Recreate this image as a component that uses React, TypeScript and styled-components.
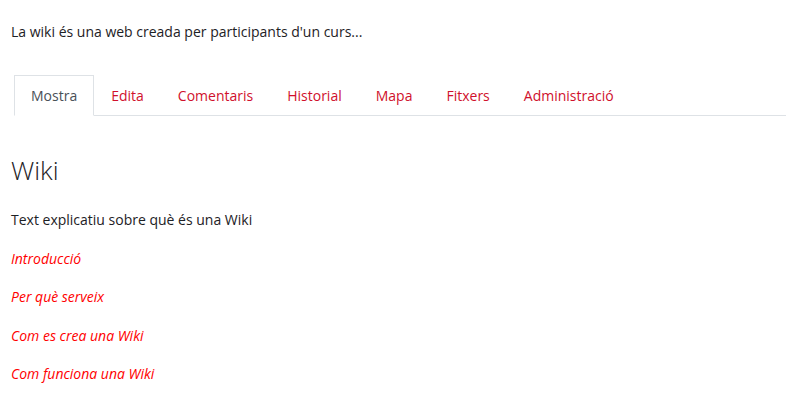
import React, { ReactElement } from 'react';
import styled, { createGlobalStyle } from 'styled-components';

const GlobalStyle = createGlobalStyle`
  html, body {
    margin: 0;
    padding: 0;
    background: #fff;
  }
  body {
    font-family: 'Open Sans', 'Noto Sans', sans-serif;
    font-size: 14px;
    line-height: 1.5;
    color: #1d2125;
  }
`;

const Page = styled.div`
  padding: 21px 11px 0 11px;
`;

const Intro = styled.p`
  margin: 0 0 32px 0;
  font-size: 14px;
  line-height: 22px;
`;

const TabList = styled.ul`
  display: flex;
  list-style: none;
  margin: 0 0 0 3px;
  padding: 0;
  border-bottom: 1px solid #dee2e6;
`;

const TabItem = styled.li`
  margin-bottom: -1px;
`;

const TabLink = styled.a<{ $active?: boolean }>`
  display: block;
  padding: 9px 16px 8px 16px;
  font-size: 14px;
  line-height: 22px;
  text-decoration: none;
  cursor: pointer;
  border: 1px solid ${(p) => (p.$active ? '#dee2e6' : 'transparent')};
  border-bottom-color: ${(p) => (p.$active ? '#fff' : 'transparent')};
  background: ${(p) => (p.$active ? '#fff' : 'transparent')};
  color: ${(p) => (p.$active ? '#495057' : '#d0102c')};
`;

const Heading = styled.h2`
  margin: 39px 0 23px 0;
  font-size: 26px;
  font-weight: 300;
  line-height: 1.2;
  color: #1d2125;
`;

const Para = styled.p`
  margin: 0 0 16px 0;
  font-size: 14px;
  line-height: 22.5px;
`;

const PageLink = styled.a`
  color: #ff0000;
  font-style: italic;
  text-decoration: none;
`;

const tabs = ['Mostra', 'Edita', 'Comentaris', 'Historial', 'Mapa', 'Fitxers', 'Administració'];
const links = ['Introducció', 'Per què serveix', 'Com es crea una Wiki', 'Com funciona una Wiki'];

function App(): ReactElement {
  return (
    <>
      <GlobalStyle />
      <Page>
        <Intro>La wiki és una web creada per participants d'un curs...</Intro>
        <TabList>
          {tabs.map((t, i) => (
            <TabItem key={t}>
              <TabLink $active={i === 0}>{t}</TabLink>
            </TabItem>
          ))}
        </TabList>
        <Heading>Wiki</Heading>
        <Para>Text explicatiu sobre què és una Wiki</Para>
        {links.map((l) => (
          <Para key={l}>
            <PageLink>{l}</PageLink>
          </Para>
        ))}
      </Page>
    </>
  );
}

export default App;
